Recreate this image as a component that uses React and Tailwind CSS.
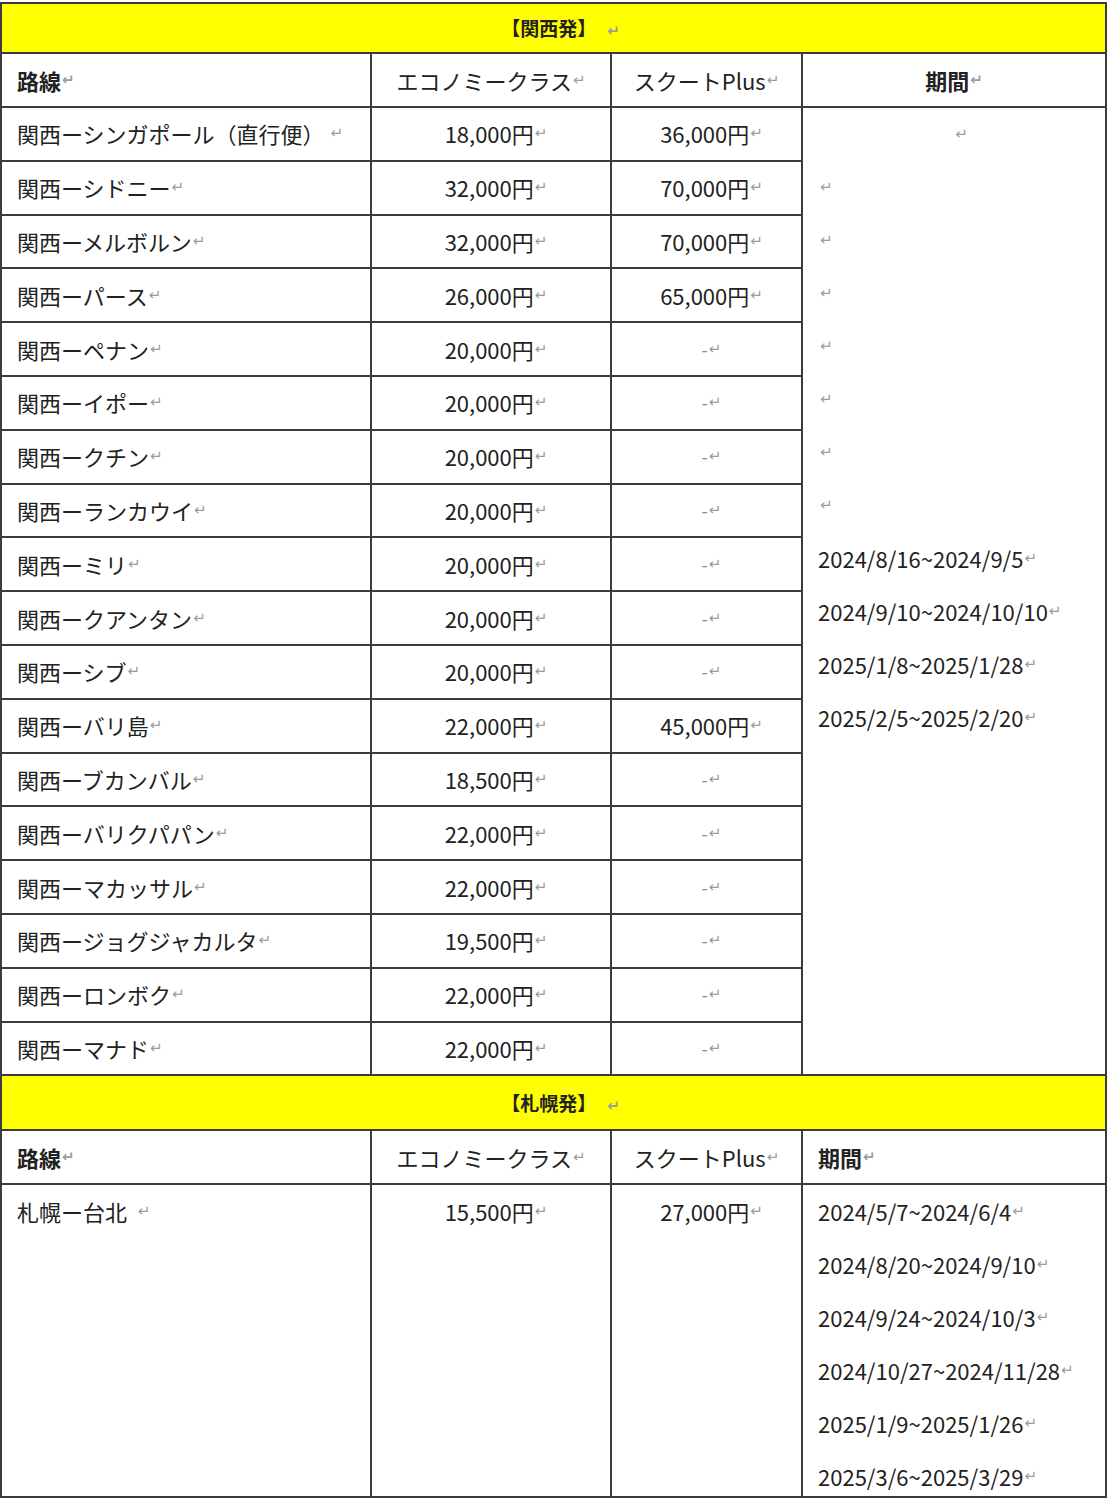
import React from "react";

const kansai = [
  ["関西ーシンガポール（直行便） ", "18,000円", "36,000円"],
  ["関西ーシドニー", "32,000円", "70,000円"],
  ["関西ーメルボルン", "32,000円", "70,000円"],
  ["関西ーパース", "26,000円", "65,000円"],
  ["関西ーペナン", "20,000円", null],
  ["関西ーイポー", "20,000円", null],
  ["関西ークチン", "20,000円", null],
  ["関西ーランカウイ", "20,000円", null],
  ["関西ーミリ", "20,000円", null],
  ["関西ークアンタン", "20,000円", null],
  ["関西ーシブ", "20,000円", null],
  ["関西ーバリ島", "22,000円", "45,000円"],
  ["関西ーブカンバル", "18,500円", null],
  ["関西ーバリクパパン", "22,000円", null],
  ["関西ーマカッサル", "22,000円", null],
  ["関西ージョグジャカルタ", "19,500円", null],
  ["関西ーロンボク", "22,000円", null],
  ["関西ーマナド", "22,000円", null],
];

const kansaiDates = [
  "2024/8/16~2024/9/5",
  "2024/9/10~2024/10/10",
  "2025/1/8~2025/1/28",
  "2025/2/5~2025/2/20",
];

const sapporoDates = [
  "2024/5/7~2024/6/4",
  "2024/8/20~2024/9/10",
  "2024/9/24~2024/10/3",
  "2024/10/27~2024/11/28",
  "2025/1/9~2025/1/26",
  "2025/3/6~2025/3/29",
];

// paragraph mark
function Ret() {
  return (
    <span
      className="ml-[1px] text-[15px] leading-none text-[#9c9c9c]"
      style={{ fontFamily: '"DejaVu Sans", sans-serif' }}
    >
      ↵
    </span>
  );
}

const cell = "border-r-2 border-b-2 border-[#3c3c3c]";

// one line of a multi-line cell, fixed height
function Line({ children, className = "" }) {
  return <div className={`flex h-[53px] shrink-0 items-center whitespace-pre ${className}`}>{children}</div>;
}

function Title({ children, h }) {
  return (
    <div className={`col-span-4 flex items-center justify-center bg-[#ffff00] pl-[14px] text-[19px] font-bold ${cell} ${h}`}>
      <span>{children}</span>
      <span className="ml-[10px]">
        <Ret />
      </span>
    </div>
  );
}

function HeaderRow({ periodLeft }) {
  return (
    <>
      <div className={`flex h-[54px] items-center pl-[15px] font-bold ${cell}`}>
        路線<Ret />
      </div>
      <div className={`flex h-[54px] items-center justify-center ${cell}`}>
        エコノミークラス<Ret />
      </div>
      <div className={`flex h-[54px] items-center justify-center ${cell}`}>
        スクートPlus<Ret />
      </div>
      <div
        className={`flex h-[54px] items-center font-bold ${cell} ${
          periodLeft ? "pl-[15px]" : "justify-center"
        }`}
      >
        期間<Ret />
      </div>
    </>
  );
}

export default function App() {
  return (
    <div
      className="min-h-[1500px] bg-white pt-[2px] text-[22px] text-[#222]"
      style={{ fontFamily: '"Noto Sans CJK JP", "Noto Sans", sans-serif' }}
    >
      <div className="grid w-[1107px] grid-cols-[370px_240px_191px_304px] border-t-2 border-l-2 border-[#3c3c3c]">
        {/* 関西発 */}
        <Title h="h-[50px]">【関西発】</Title>
        <HeaderRow />

        {kansai.map(([route, eco, plus], i) => (
          <React.Fragment key={route}>
            <div className={`flex h-[53.8px] items-center whitespace-pre pl-[15px] ${cell}`}>
              {route}
              <Ret />
            </div>
            <div className={`flex h-[53.8px] items-center justify-center pl-[10px] ${cell}`}>
              {eco}
              <Ret />
            </div>
            <div className={`flex h-[53.8px] items-center justify-center pl-[10px] ${cell}`}>
              {plus ? plus : <span className="text-[18px] text-[#8a8a8a]">-</span>}
              <Ret />
            </div>
            {i === 0 && (
              <div className={`row-span-18 flex flex-col ${cell}`}>
                <Line className="justify-center pl-[14px]">
                  <Ret />
                </Line>
                {[0, 1, 2, 3, 4, 5, 6].map((n) => (
                  <Line key={n} className="pl-[16px]">
                    <Ret />
                  </Line>
                ))}
                {kansaiDates.map((d) => (
                  <Line key={d} className="pl-[15px]">
                    {d}
                    <Ret />
                  </Line>
                ))}
              </div>
            )}
          </React.Fragment>
        ))}

        {/* 札幌発 */}
        <Title h="h-[55px]">【札幌発】</Title>
        <HeaderRow periodLeft />

        <div className={`h-[313px] pl-[15px] ${cell}`}>
          <Line>
            {"札幌ー台北  "}
            <Ret />
          </Line>
        </div>
        <div className={`h-[313px] pl-[10px] ${cell}`}>
          <Line className="justify-center">
            15,500円<Ret />
          </Line>
        </div>
        <div className={`h-[313px] pl-[10px] ${cell}`}>
          <Line className="justify-center">
            27,000円<Ret />
          </Line>
        </div>
        <div className={`flex h-[313px] flex-col pl-[15px] ${cell}`}>
          {sapporoDates.map((d) => (
            <Line key={d}>
              {d}
              <Ret />
            </Line>
          ))}
        </div>
      </div>
    </div>
  );
}
